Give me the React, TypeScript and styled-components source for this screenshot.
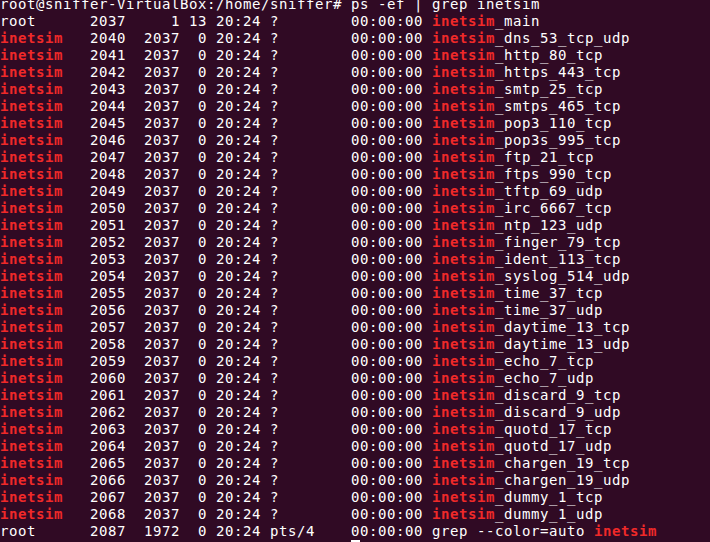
import React from "react";
import styled, { createGlobalStyle } from "styled-components";

const GlobalStyle = createGlobalStyle`
  html, body {
    margin: 0;
    padding: 0;
    background: #300a24;
    overflow: hidden;
  }
`;

const Terminal = styled.div`
  width: 710px;
  height: 542px;
  overflow: hidden;
  background: #300a24;
  color: #ffffff;
  font-family: "DejaVu Sans Mono", "Liberation Mono", monospace;
  font-size: 14px;
  letter-spacing: 0.57px;
  line-height: 17px;
`;

const Screen = styled.div`
  margin-top: -4px;
  display: flex;
  flex-direction: column;
`;

const Line = styled.div`
  height: 17px;
  white-space: pre;
`;

const Match = styled.span`
  color: #ef2929;
  font-weight: bold;
`;

const Cursor = styled.span`
  display: inline-block;
  width: 9px;
  height: 17px;
  vertical-align: top;
  background: #ffffff;
`;

const services: [number, string][] = [
  [2040, "_dns_53_tcp_udp"],
  [2041, "_http_80_tcp"],
  [2042, "_https_443_tcp"],
  [2043, "_smtp_25_tcp"],
  [2044, "_smtps_465_tcp"],
  [2045, "_pop3_110_tcp"],
  [2046, "_pop3s_995_tcp"],
  [2047, "_ftp_21_tcp"],
  [2048, "_ftps_990_tcp"],
  [2049, "_tftp_69_udp"],
  [2050, "_irc_6667_tcp"],
  [2051, "_ntp_123_udp"],
  [2052, "_finger_79_tcp"],
  [2053, "_ident_113_tcp"],
  [2054, "_syslog_514_udp"],
  [2055, "_time_37_tcp"],
  [2056, "_time_37_udp"],
  [2057, "_daytime_13_tcp"],
  [2058, "_daytime_13_udp"],
  [2059, "_echo_7_tcp"],
  [2060, "_echo_7_udp"],
  [2061, "_discard_9_tcp"],
  [2062, "_discard_9_udp"],
  [2063, "_quotd_17_tcp"],
  [2064, "_quotd_17_udp"],
  [2065, "_chargen_19_tcp"],
  [2066, "_chargen_19_udp"],
  [2067, "_dummy_1_tcp"],
  [2068, "_dummy_1_udp"],
];

const PROMPT = "root@sniffer-VirtualBox:/home/sniffer# ";

export default function App() {
  return (
    <>
      <GlobalStyle />
      <Terminal>
        <Screen>
          <Line>{PROMPT}ps -ef | grep inetsim</Line>
          <Line>
            {"root      2037     1 13 20:24 ?        00:00:00 "}
            <Match>inetsim</Match>
            {"_main"}
          </Line>
          {services.map(([pid, name]) => (
            <Line key={pid}>
              <Match>inetsim</Match>
              {`   ${pid}  2037  0 20:24 ?        00:00:00 `}
              <Match>inetsim</Match>
              {name}
            </Line>
          ))}
          <Line>
            {"root      2087  1972  0 20:24 pts/4    00:00:00 grep --color=auto "}
            <Match>inetsim</Match>
          </Line>
          <Line>
            {PROMPT}
            <Cursor />
          </Line>
        </Screen>
      </Terminal>
    </>
  );
}
